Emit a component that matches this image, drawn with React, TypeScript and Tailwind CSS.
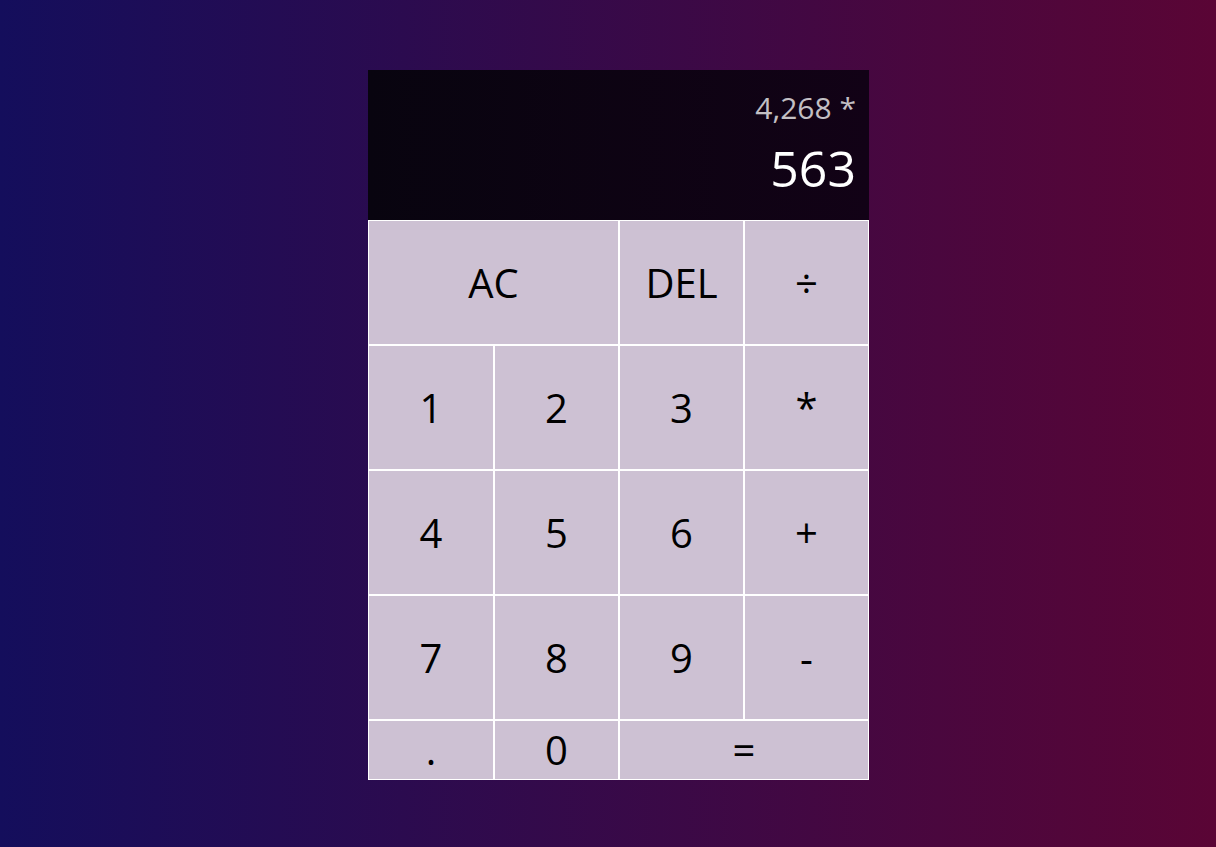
const keys: { label: string; span?: string }[] = [
  { label: "AC", span: "col-span-2" },
  { label: "DEL" },
  { label: "÷" },
  { label: "1" },
  { label: "2" },
  { label: "3" },
  { label: "*" },
  { label: "4" },
  { label: "5" },
  { label: "6" },
  { label: "+" },
  { label: "7" },
  { label: "8" },
  { label: "9" },
  { label: "-" },
  { label: "." },
  { label: "0" },
  { label: "=", span: "col-span-2" },
];

export default function App() {
  return (
    <div
      className="min-h-[847px] flex justify-center pl-[21px] pt-[70px] bg-[linear-gradient(to_right,#140e5c,#5a0535)]"
      style={{ fontFamily: '"Open Sans", "Noto Sans", sans-serif' }}
    >
      <div className="w-[501px] self-start">
        {/* output */}
        <div className="h-[150px] flex flex-col items-end gap-5 px-[13px] pt-[23px] bg-[linear-gradient(to_right,#08040f,#120216)] break-all">
          <div className="text-[30px] leading-none text-white/75">4,268 *</div>
          <div className="text-[50px] leading-none text-white">563</div>
        </div>
        <div className="grid grid-cols-[124px_123px_123px_123px] grid-rows-[123px_123px_123px_123px_58px] gap-[2px] p-px bg-white">
          {keys.map((k) => (
            <button
              key={k.label}
              className={`${k.span ?? ""} flex items-center justify-center bg-[#cdc1d3] text-[40px] text-black cursor-pointer hover:bg-[#ddd4e1]`}
            >
              {k.label}
            </button>
          ))}
        </div>
      </div>
    </div>
  );
}
